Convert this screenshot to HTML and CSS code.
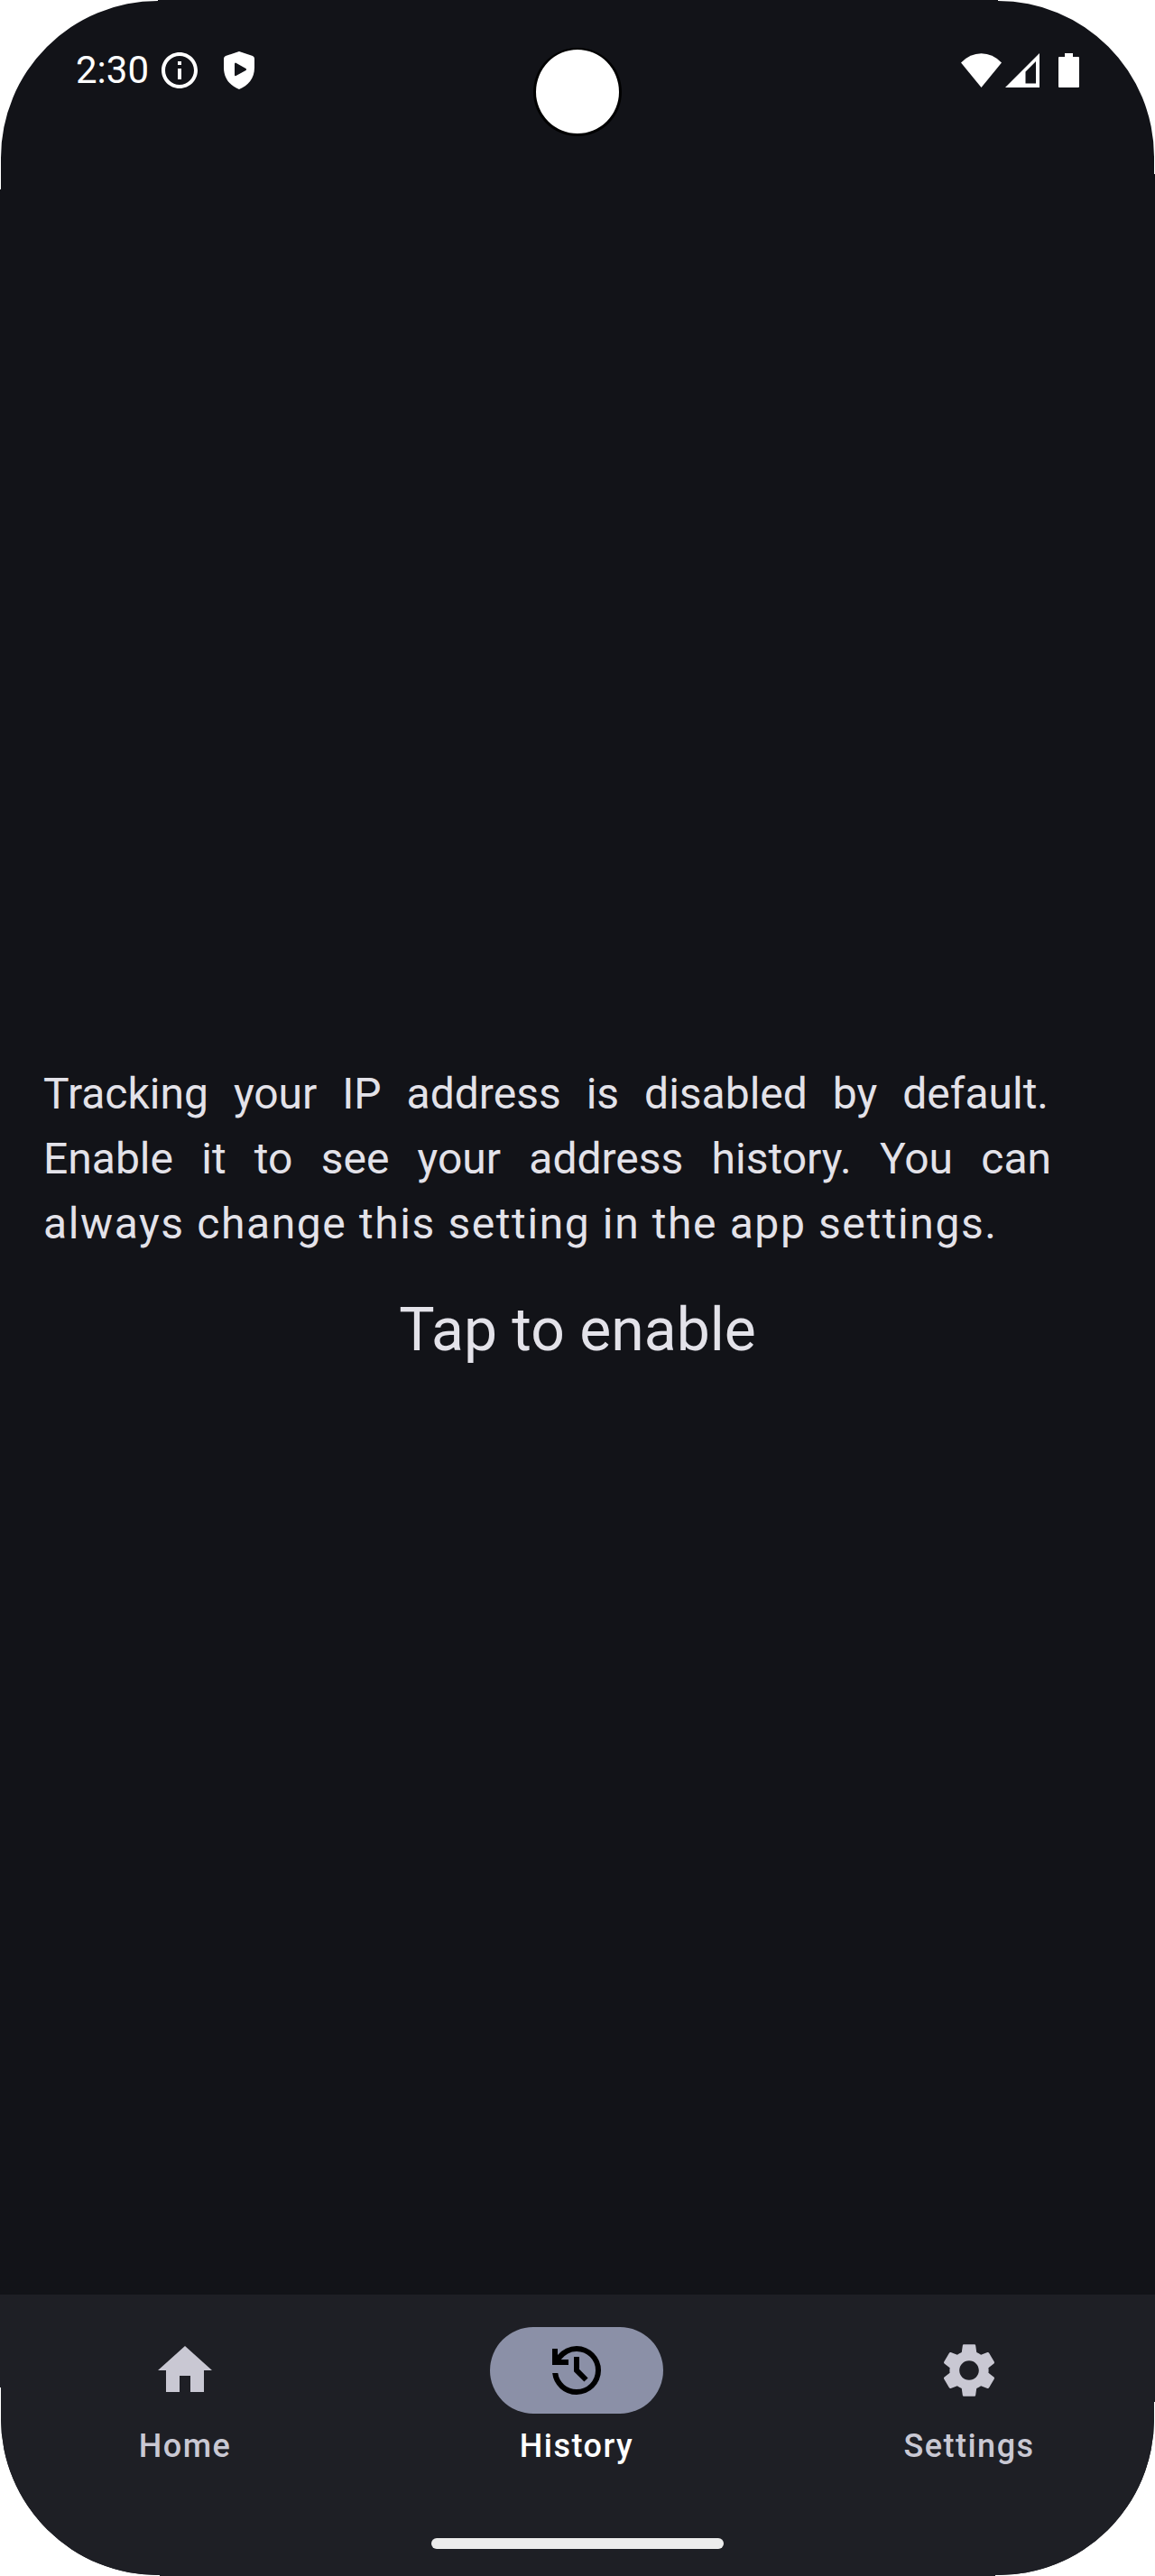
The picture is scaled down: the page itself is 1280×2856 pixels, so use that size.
FILE: index.html
```html
<!DOCTYPE html>
<html lang="en">
<head>
<meta charset="utf-8">
<title>History</title>
<link rel="stylesheet" href="styles.css">
</head>
<body>
<div class="screen">
  <header class="status-bar">
    <div class="status-group">
      <span class="clock">2:30</span>
      <svg class="icon-info" viewBox="0 0 24 24"><path d="M11 7h2v2h-2zm0 4h2v6h-2zm1-9C6.480 2 2 6.480 2 12s4.480 10 10 10 10-4.480 10-10S17.520 2 12 2zm0 18c-4.410 0-8-3.590-8-8s3.590-8 8-8 8 3.590 8 8-3.590 8-8 8z"/></svg>
      <svg class="icon-shield" viewBox="0 0 34 42"><path fill-rule="evenodd" d="M17 0L32 5Q34 6 34 8V18C34 30 27 38 17 42C7 38 0 30 0 18V8Q0 6 2 5ZM13 12.500Q12 12.500 12 14V26Q12 27.700 13.500 27L24.500 21Q25.600 20 24.500 19Z"/></svg>
    </div>
    <div class="status-group">
      <svg class="icon-wifi" viewBox="0 0 45 38"><path d="M0 10.500Q10 0.300 22.500 0.300T45 10.500L22.500 38Z"/></svg>
      <svg class="icon-signal" viewBox="0 0 38 38"><path fill-rule="evenodd" d="M0 38L38 0V38ZM22.500 20.500V33.500H34V9Z"/></svg>
      <svg class="icon-battery" viewBox="0 0 23 38"><path d="M7 0H16V4H22Q23 4 23 5V37Q23 38 22 38H1Q0 38 0 37V5Q0 4 1 4H7Z"/></svg>
    </div>
    <div class="camera"></div>
  </header>
  <main class="content">
    <p class="message">
      <span class="line justified first">Tracking your IP address is disabled by default.</span>
      <span class="line justified">Enable it to see your address history. You can</span>
      <span class="line">always change this setting in the app settings.</span>
    </p>
    <a class="enable">Tap to enable</a>
  </main>
  <footer class="bottom">
    <nav class="nav">
      <a class="nav-item">
        <span class="pill"><svg class="nav-icon" viewBox="0 0 24 24"><path d="M10 20v-6h4v6h5v-8h3L12 3 2 12h3v8z"/></svg></span>
        <span class="label">Home</span>
      </a>
      <a class="nav-item active">
        <span class="pill"><svg class="nav-icon" viewBox="0 0 24 24"><path d="M12 21q-3.450 0-6.012-2.287T3.050 13H5.100q.35 2.600 2.313 4.300T12 19q2.925 0 4.963-2.037T19 12t-2.037-4.962T12 5q-1.725 0-3.225.8T6.250 8H9v2H3V4h2v2.350q1.275-1.600 3.113-2.475T12 3q1.875 0 3.513.713t2.850 1.924t1.925 2.850T21 12t-.712 3.513t-1.925 2.850t-2.850 1.925T12 21m2.800-4.800L11 12.400V7h2v4.600l3.200 3.200z"/></svg></span>
        <span class="label">History</span>
      </a>
      <a class="nav-item">
        <span class="pill"><svg class="nav-icon" viewBox="0 0 24 24"><path d="M19.140 12.940c.04-.3.060-.61.060-.94 0-.32-.02-.64-.07-.94l2.030-1.580c.18-.14.230-.41.120-.61l-1.920-3.320c-.12-.22-.37-.29-.59-.22l-2.390.96c-.5-.38-1.030-.7-1.620-.94l-.36-2.540c-.04-.24-.24-.41-.48-.41h-3.840c-.24 0-.43.170-.47.410l-.36 2.540c-.59.240-1.130.570-1.620.940l-2.390-.96c-.22-.08-.47 0-.59.220L2.740 8.870c-.12.210-.08.470.120.610l2.030 1.580c-.05.300-.09.630-.09.940s.02.640.070.940l-2.030 1.580c-.18.140-.23.410-.12.610l1.920 3.320c.12.220.370.290.590.220l2.390-.96c.5.380 1.030.700 1.620.940l.36 2.540c.05.240.240.410.480.410h3.840c.24 0 .44-.17.470-.41l.36-2.540c.59-.24 1.130-.56 1.620-.94l2.390.96c.22.080.470 0 .59-.22l1.920-3.320c.12-.22.070-.47-.12-.61l-2.010-1.580zM12 15.600c-1.980 0-3.600-1.620-3.600-3.600s1.620-3.600 3.600-3.600 3.600 1.620 3.600 3.600-1.620 3.600-3.600 3.600z"/></svg></span>
        <span class="label">Settings</span>
      </a>
    </nav>
    <div class="gesture-bar"></div>
  </footer>
</div>
</body>
</html>
```
FILE: styles.css
```css
* { box-sizing: border-box; }
body {
  margin: 0;
  background: #fff;
  font-family: Roboto, sans-serif;
}
svg { display: block; fill: currentColor; }
.screen {
  display: flex;
  flex-direction: column;
  width: 1280px;
  height: 2856px;
  overflow: hidden;
  /* rounded display outline with a one-pixel step where each curve meets its edge */
  clip-path: path("M0 210H1V175A174 174 0 0 1 175 1V0H1106V1A173 173 0 0 1 1279 174V193H1280V2663H1279V2682A173 173 0 0 1 1103 2855V2856H177V2855A174 174 0 0 1 1 2681V2647H0Z");
  background: #121318;
  color: #e3e2e9;
}
.status-bar {
  position: relative;
  display: flex;
  justify-content: space-between;
  align-items: center;
  height: 150px;
  padding: 6px 84px 0;
  color: #fff;
}
.status-group { display: flex; align-items: center; }
.clock { font-size: 42px; line-height: 48px; width: 91px; }
.icon-info { width: 48px; height: 48px; }
.icon-shield { width: 34px; height: 42px; margin-left: 25px; }
.icon-wifi { width: 45px; height: 38px; }
.icon-signal { width: 38px; height: 38px; margin-left: 4px; }
.icon-battery { width: 23px; height: 38px; margin-left: 21px; }
.camera {
  position: absolute;
  top: 53px;
  left: 591px;
  width: 98px;
  height: 98px;
  border: 3px solid #000;
  border-top-width: 2px;
  border-radius: 50%;
  background: #fff;
}
.content {
  flex: 1;
  display: flex;
  flex-direction: column;
  justify-content: center;
  align-items: center;
  gap: 40px;
  padding: 0 48px 1px;
}
.message {
  align-self: flex-start;
  width: 1117px;
  margin: 0;
  font-size: 48px;
  line-height: 72px;
}
.line { display: block; white-space: nowrap; letter-spacing: 1.6px; }
.justified { text-align-last: justify; letter-spacing: 0; }
.first { width: 1114px; }
.enable { font-size: 66px; line-height: 84px; }
.bottom {
  display: flex;
  flex-direction: column;
  align-items: center;
  justify-content: space-between;
  height: 312px;
  padding: 36px 0 30px;
  background: #1e1f25;
}
.nav {
  display: grid;
  grid-template-columns: 410px 410px 412px;
  gap: 24px;
  width: 100%;
}
.nav-item {
  display: flex;
  flex-direction: column;
  align-items: center;
  gap: 12px;
  color: #c9c8d3;
}
.pill {
  display: grid;
  place-items: center;
  width: 192px;
  height: 96px;
  border-radius: 48px;
}
.nav-icon { width: 72px; height: 72px; }
.label { font-size: 36px; line-height: 48px; font-weight: 500; letter-spacing: 1.5px; }
.active { color: #fff; }
.active .pill { background: #8b90a7; color: #000; }
.gesture-bar { width: 324px; height: 12px; border-radius: 6px; background: #ececec; }
```
